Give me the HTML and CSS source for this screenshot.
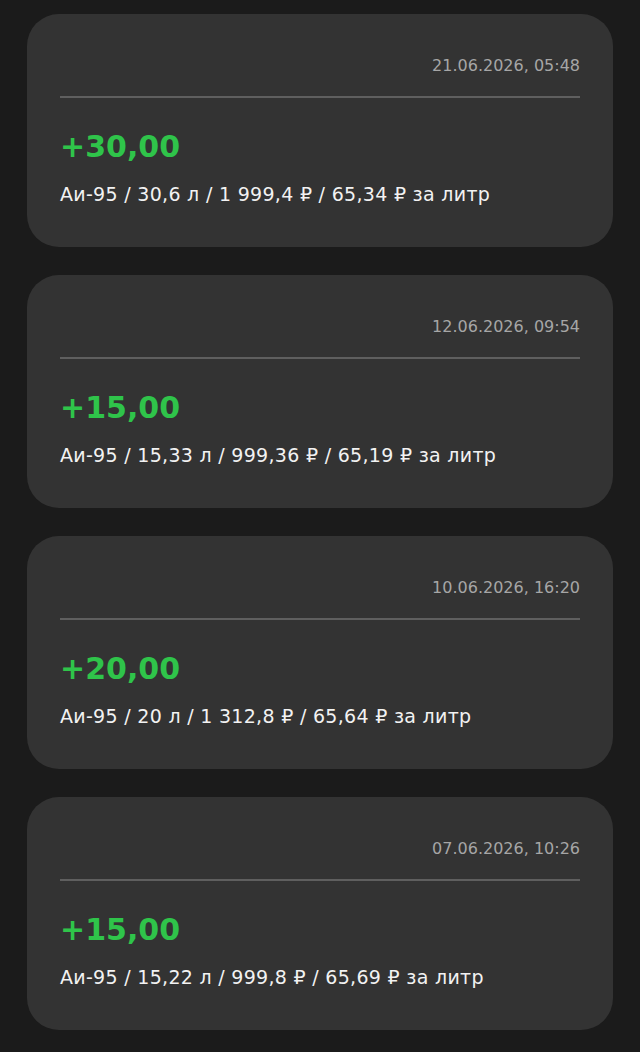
FILE: index.html
```html
<!DOCTYPE html>
<html>
<head>
    <link rel="stylesheet" href="styles.css">
    <title>История заправок</title>
</head>

<body>
    <div class="list">
        <div class="card">
            <div class="date">21.06.2026, 05:48</div>
            <div class="divider"></div>
            <div class="amount">+30,00</div>
            <div class="details">Аи-95 / 30,6 л / 1 999,4 ₽ / 65,34 ₽ за литр</div>
        </div>
        <div class="card">
            <div class="date">12.06.2026, 09:54</div>
            <div class="divider"></div>
            <div class="amount">+15,00</div>
            <div class="details">Аи-95 / 15,33 л / 999,36 ₽ / 65,19 ₽ за литр</div>
        </div>
        <div class="card">
            <div class="date">10.06.2026, 16:20</div>
            <div class="divider"></div>
            <div class="amount">+20,00</div>
            <div class="details">Аи-95 / 20 л / 1 312,8 ₽ / 65,64 ₽ за литр</div>
        </div>
        <div class="card">
            <div class="date">07.06.2026, 10:26</div>
            <div class="divider"></div>
            <div class="amount">+15,00</div>
            <div class="details">Аи-95 / 15,22 л / 999,8 ₽ / 65,69 ₽ за литр</div>
        </div>
    </div>
</body>
</html>
```

FILE: styles.css
```css
body {
    background-color: #1b1b1b;
    font-family: 'DejaVu Sans', sans-serif;
    margin: 0;
}
.list {
    display: flex;
    flex-direction: column;
    gap: 28px;
    padding: 14px 27px;
}
.card {
    background-color: #333333;
    border-radius: 32px;
    height: 233px;
    box-sizing: border-box;
    padding: 42px 33px 0 33px;
}
.date {
    color: #a6a6a6;
    font-size: 16px;
    line-height: 20px;
    text-align: right;
}
.divider {
    height: 2px;
    background-color: #5f5f5f;
    margin-top: 20px;
}
.amount {
    color: #2fc44a;
    font-size: 30px;
    font-weight: bold;
    line-height: 36px;
    margin-top: 31px;
}
.details {
    color: #f2f2f2;
    font-size: 19px;
    letter-spacing: 0.3px;
    line-height: 24px;
    margin-top: 17px;
}
```
